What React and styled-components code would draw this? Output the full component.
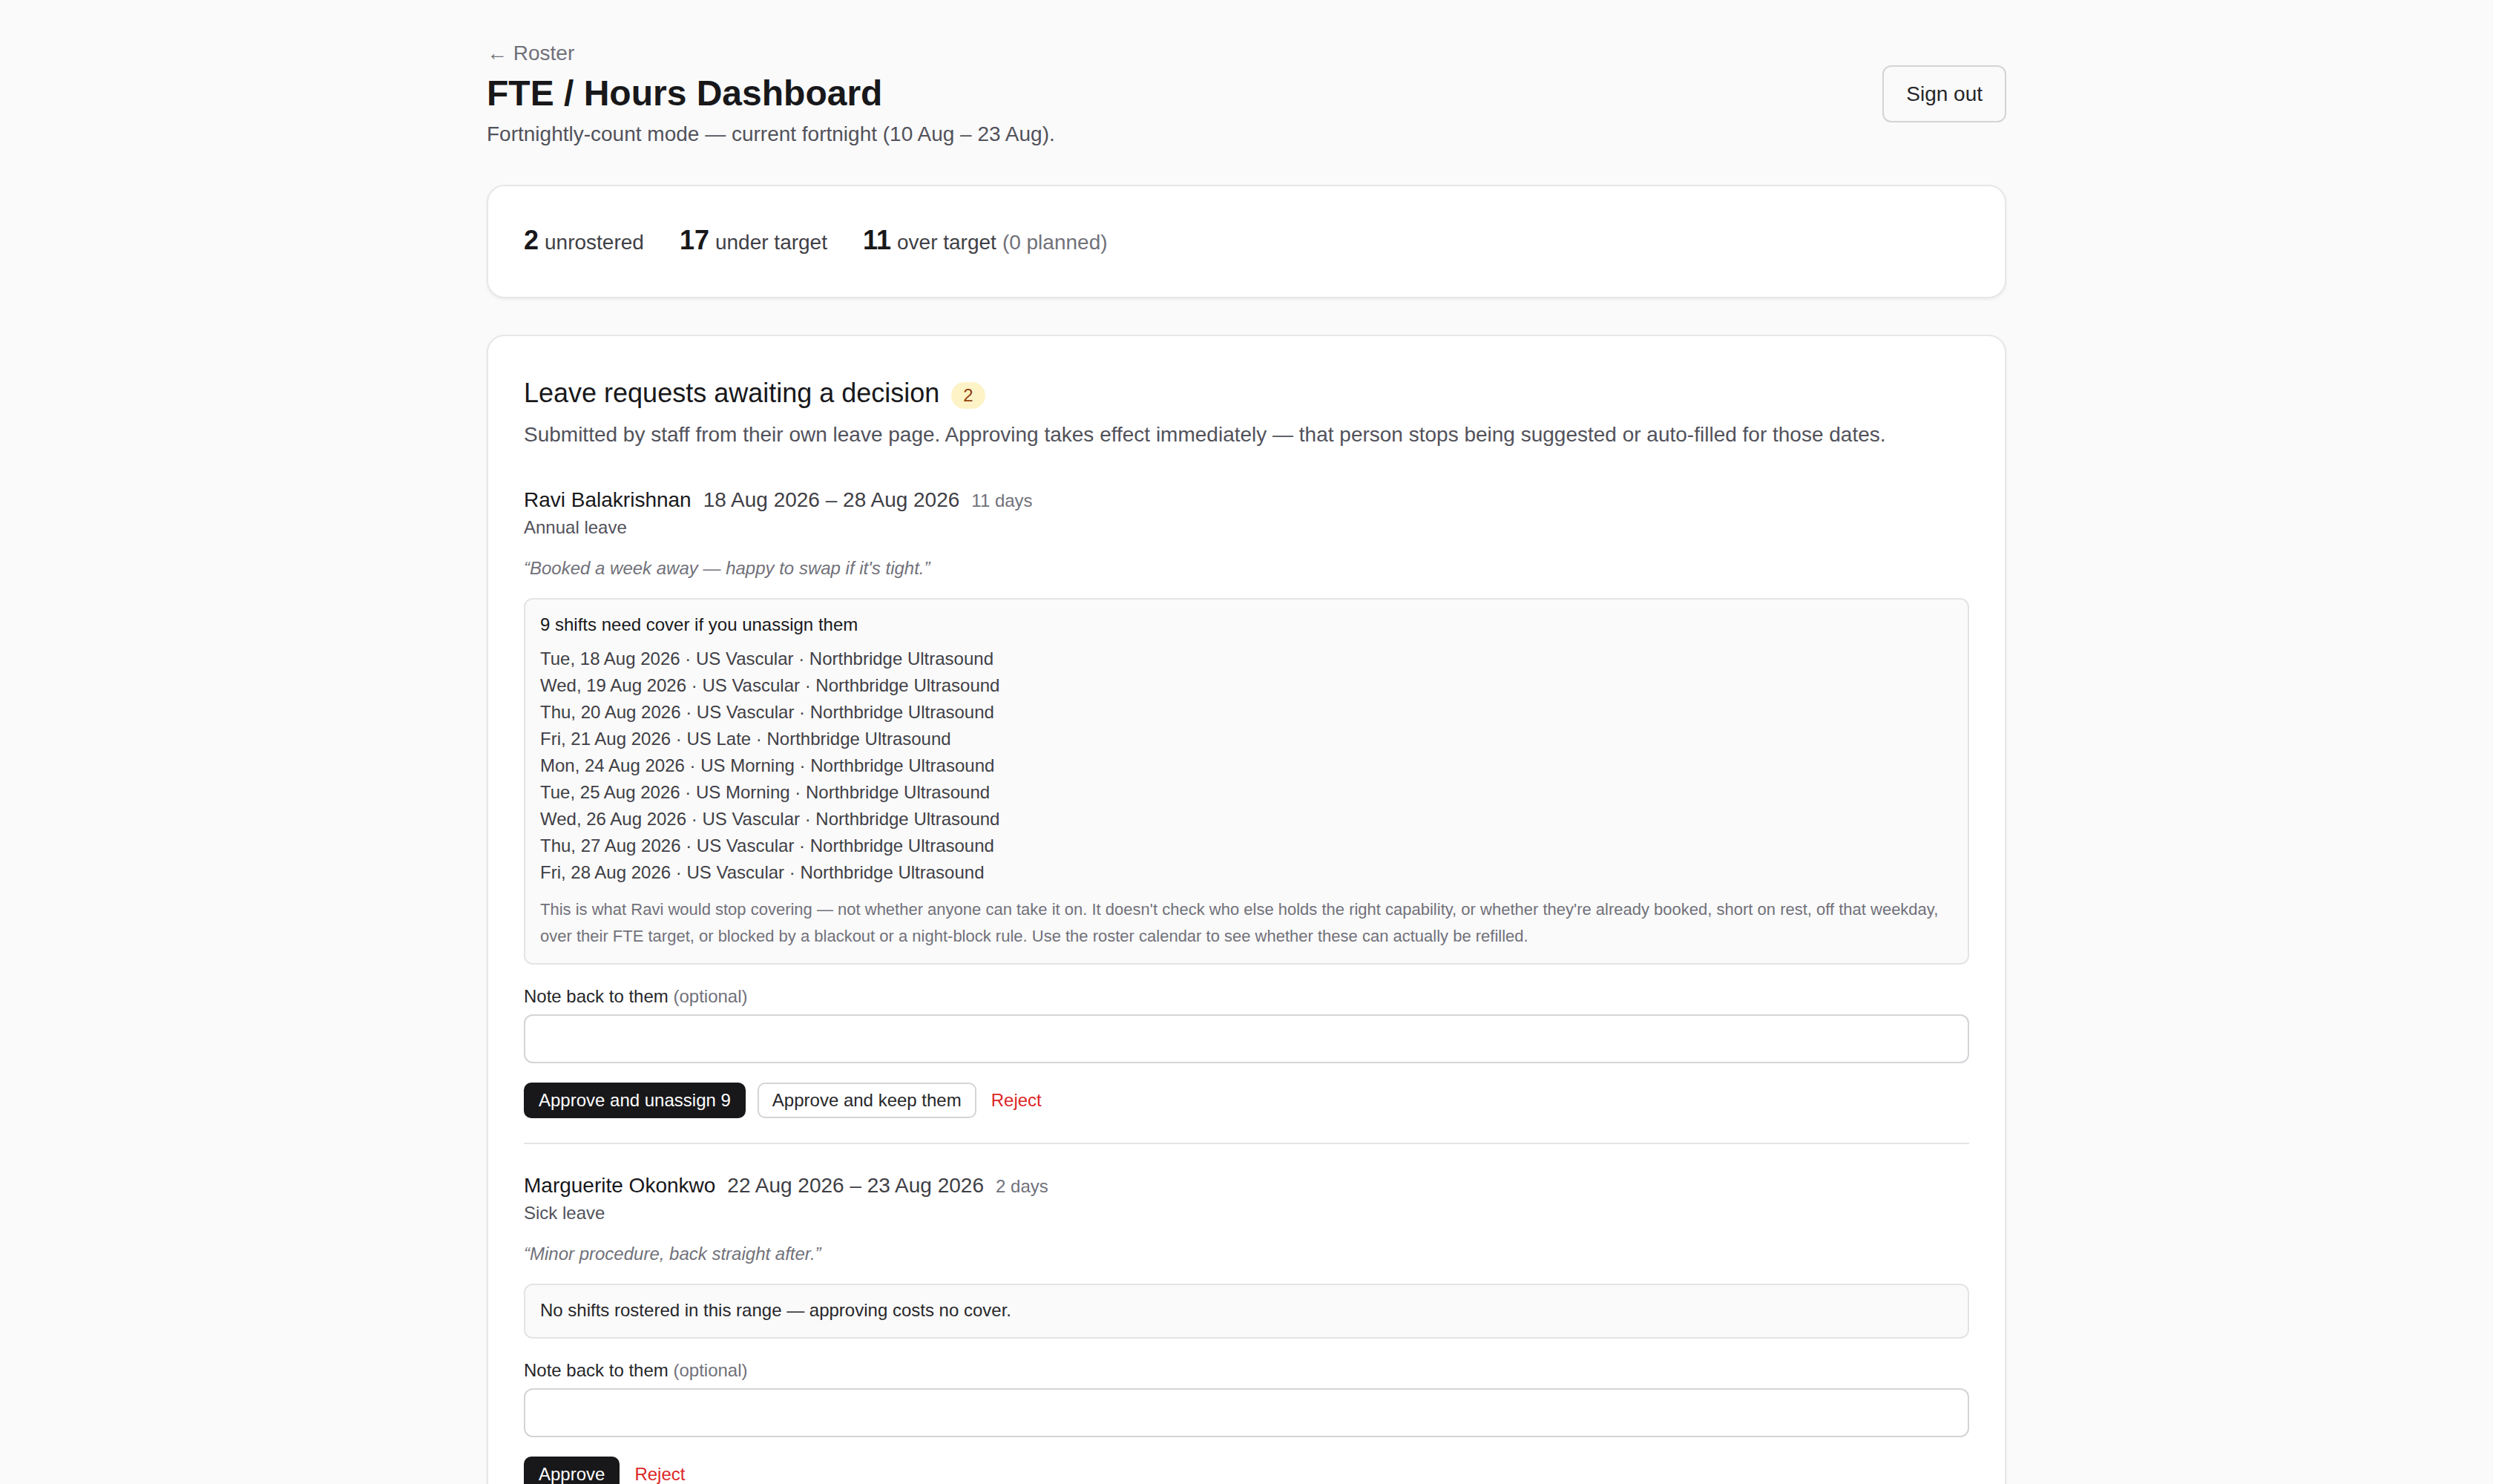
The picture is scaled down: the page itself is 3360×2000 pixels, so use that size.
import React from "react";
import styled, { createGlobalStyle } from "styled-components";

const GlobalStyle = createGlobalStyle`
  html, body {
    margin: 0;
    padding: 0;
    background: #fafafa;
  }
  body {
    font-family: "Liberation Sans", Arial, Helvetica, sans-serif;
    color: #18181b;
    -webkit-font-smoothing: antialiased;
  }
  * { box-sizing: border-box; }
`;

const Page = styled.main`
  max-width: 2048px;
  margin: 0 auto;
  padding: 52px 0 80px;
`;

const Header = styled.header`
  display: flex;
  align-items: center;
  justify-content: space-between;
`;

const TitleBlock = styled.div`
  display: flex;
  flex-direction: column;
`;

const BackLink = styled.a`
  font-size: 28px;
  line-height: 40px;
  color: #71717a;
  text-decoration: none;
`;

const Title = styled.h1`
  margin: 4px 0 0;
  font-size: 48px;
  line-height: 60px;
  font-weight: 700;
  color: #18181b;
`;

const Subtitle = styled.p`
  margin: 5px 0 0;
  font-size: 28px;
  line-height: 40px;
  color: #52525b;
`;

const GhostButton = styled.button`
  font-family: inherit;
  font-size: 28px;
  line-height: 39px;
  padding: 17px 30px;
  border: 2px solid #d4d4d8;
  border-radius: 12px;
  background: transparent;
  color: #27272a;
  cursor: pointer;
`;

const Card = styled.section`
  margin-top: ${(p) => p.$gap || 48}px;
  background: #ffffff;
  border: 2px solid #e7e7e9;
  border-radius: 24px;
  box-shadow: 0 2px 4px rgba(0, 0, 0, 0.06);
  padding: 48px;
`;

const StatsRow = styled.div`
  display: flex;
  align-items: baseline;
  gap: 48px;
`;

const Stat = styled.div`
  display: flex;
  align-items: baseline;
  gap: 8px;
  font-size: 28px;
  line-height: 50px;
  color: #3f3f46;
`;

const StatNumber = styled.strong`
  font-size: 36px;
  font-weight: 700;
  color: #18181b;
`;

const Muted = styled.span`
  color: #71717a;
`;

const SectionHead = styled.div`
  display: flex;
  align-items: center;
  gap: 16px;
  margin-top: 2px;
`;

const SectionTitle = styled.h2`
  margin: 0;
  font-size: 36px;
  line-height: 54px;
  font-weight: 400;
  color: #18181b;
`;

const CountBadge = styled.span`
  display: inline-block;
  padding: 0 16px;
  border-radius: 999px;
  background: #fef3c7;
  color: #92400e;
  font-size: 24px;
  line-height: 36px;
  margin-top: 6px;
`;

const SectionNote = styled.p`
  margin: 9px 0 0;
  font-size: 28px;
  line-height: 40px;
  color: #52525b;
`;

const RequestList = styled.div`
  margin-top: 16px;
`;

const Request = styled.article`
  padding: 34px 0 33px;
  & + & {
    padding-top: 38px;
    border-top: 2px solid #e4e4e7;
  }
`;

const RequestHead = styled.div`
  display: flex;
  align-items: baseline;
  gap: 16px;
  line-height: 36px;
`;

const Name = styled.span`
  font-size: 28px;
  color: #18181b;
`;

const Dates = styled.span`
  font-size: 28px;
  color: #3f3f46;
`;

const Days = styled.span`
  font-size: 24px;
  color: #71717a;
`;

const LeaveType = styled.div`
  font-size: 24px;
  line-height: 36px;
  color: #52525b;
`;

const Quote = styled.p`
  margin: 19px 0 0;
  font-size: 24px;
  line-height: 36px;
  font-style: italic;
  color: #71717a;
`;

const CoverBox = styled.div`
  margin-top: 22px;
  padding: 16px 20px 18px;
  background: #fafafa;
  border: 2px solid #e4e4e7;
  border-radius: 12px;
  font-size: 24px;
  line-height: 36px;
  color: #27272a;
`;

const CoverTitle = styled.div`
  color: #18181b;
`;

const ShiftList = styled.ul`
  list-style: none;
  margin: 10px 0 0;
  padding: 0;
  color: #3f3f46;
`;

const CoverFootnote = styled.p`
  margin: 14px 0 0;
  font-size: 22px;
  line-height: 36px;
  color: #71717a;
`;

const FieldLabel = styled.label`
  display: block;
  margin-top: 25px;
  font-size: 24px;
  line-height: 36px;
  color: #27272a;
`;

const NoteInput = styled.input`
  display: block;
  width: 100%;
  height: 66px;
  margin-top: 6px;
  padding: 0 20px;
  font-family: inherit;
  font-size: 24px;
  border: 2px solid #d4d4d8;
  border-radius: 12px;
  background: #ffffff;
  outline: none;
`;

const Actions = styled.div`
  display: flex;
  align-items: center;
  gap: 16px;
  margin-top: 26px;
`;

const ActionButton = styled.button`
  font-family: inherit;
  font-size: 24px;
  line-height: 44px;
  padding: 0 18px;
  border-radius: 10px;
  cursor: pointer;
  border: 2px solid ${(p) => (p.$primary ? "#18181b" : "#d4d4d8")};
  background: ${(p) => (p.$primary ? "#18181b" : "#ffffff")};
  color: ${(p) => (p.$primary ? "#ffffff" : "#27272a")};
`;

const RejectLink = styled.button`
  font-family: inherit;
  font-size: 24px;
  line-height: 44px;
  padding: 0;
  margin-left: 4px;
  border: none;
  background: none;
  color: #dc2626;
  cursor: pointer;
`;

const requests = [
  {
    name: "Ravi Balakrishnan",
    from: "18 Aug 2026",
    to: "28 Aug 2026",
    days: "11 days",
    type: "Annual leave",
    note: "“Booked a week away — happy to swap if it's tight.”",
    shifts: [
      "Tue, 18 Aug 2026 · US Vascular · Northbridge Ultrasound",
      "Wed, 19 Aug 2026 · US Vascular · Northbridge Ultrasound",
      "Thu, 20 Aug 2026 · US Vascular · Northbridge Ultrasound",
      "Fri, 21 Aug 2026 · US Late · Northbridge Ultrasound",
      "Mon, 24 Aug 2026 · US Morning · Northbridge Ultrasound",
      "Tue, 25 Aug 2026 · US Morning · Northbridge Ultrasound",
      "Wed, 26 Aug 2026 · US Vascular · Northbridge Ultrasound",
      "Thu, 27 Aug 2026 · US Vascular · Northbridge Ultrasound",
      "Fri, 28 Aug 2026 · US Vascular · Northbridge Ultrasound",
    ],
  },
  {
    name: "Marguerite Okonkwo",
    from: "22 Aug 2026",
    to: "23 Aug 2026",
    days: "2 days",
    type: "Sick leave",
    note: "“Minor procedure, back straight after.”",
    shifts: [],
  },
];

const coverCaveat = (first) =>
  `This is what ${first} would stop covering — not whether anyone can take it on. ` +
  "It doesn't check who else holds the right capability, or whether they're already booked, " +
  "short on rest, off that weekday, over their FTE target, or blocked by a blackout or a " +
  "night-block rule. Use the roster calendar to see whether these can actually be refilled.";

function RequestItem({ req }) {
  const first = req.name.split(" ")[0];
  const count = req.shifts.length;
  return (
    <Request>
      <RequestHead>
        <Name>{req.name}</Name>
        <Dates>{`${req.from} – ${req.to}`}</Dates>
        <Days>{req.days}</Days>
      </RequestHead>
      <LeaveType>{req.type}</LeaveType>
      <Quote>{req.note}</Quote>
      {count > 0 ? (
        <CoverBox>
          <CoverTitle>{`${count} shifts need cover if you unassign them`}</CoverTitle>
          <ShiftList>
            {req.shifts.map((s) => (
              <li key={s}>{s}</li>
            ))}
          </ShiftList>
          <CoverFootnote>{coverCaveat(first)}</CoverFootnote>
        </CoverBox>
      ) : (
        <CoverBox>No shifts rostered in this range — approving costs no cover.</CoverBox>
      )}
      <FieldLabel>
        Note back to them <Muted>(optional)</Muted>
      </FieldLabel>
      <NoteInput type="text" />
      <Actions>
        {count > 0 ? (
          <>
            <ActionButton $primary>{`Approve and unassign ${count}`}</ActionButton>
            <ActionButton>Approve and keep them</ActionButton>
          </>
        ) : (
          <ActionButton $primary>Approve</ActionButton>
        )}
        <RejectLink>Reject</RejectLink>
      </Actions>
    </Request>
  );
}

export default function App() {
  return (
    <>
      <GlobalStyle />
      <Page>
        <Header>
          <TitleBlock>
            <BackLink href="#">← Roster</BackLink>
            <Title>FTE / Hours Dashboard</Title>
            <Subtitle>Fortnightly-count mode — current fortnight (10 Aug – 23 Aug).</Subtitle>
          </TitleBlock>
          <GhostButton>Sign out</GhostButton>
        </Header>

        <Card $gap={48}>
          <StatsRow>
            <Stat>
              <StatNumber>2</StatNumber>unrostered
            </Stat>
            <Stat>
              <StatNumber>17</StatNumber>under target
            </Stat>
            <Stat>
              <StatNumber>11</StatNumber>over target <Muted>(0 planned)</Muted>
            </Stat>
          </StatsRow>
        </Card>

        <Card $gap={49}>
          <SectionHead>
            <SectionTitle>Leave requests awaiting a decision</SectionTitle>
            <CountBadge>2</CountBadge>
          </SectionHead>
          <SectionNote>
            Submitted by staff from their own leave page. Approving takes effect immediately — that
            person stops being suggested or auto-filled for those dates.
          </SectionNote>
          <RequestList>
            {requests.map((r) => (
              <RequestItem key={r.name} req={r} />
            ))}
          </RequestList>
        </Card>
      </Page>
    </>
  );
}
